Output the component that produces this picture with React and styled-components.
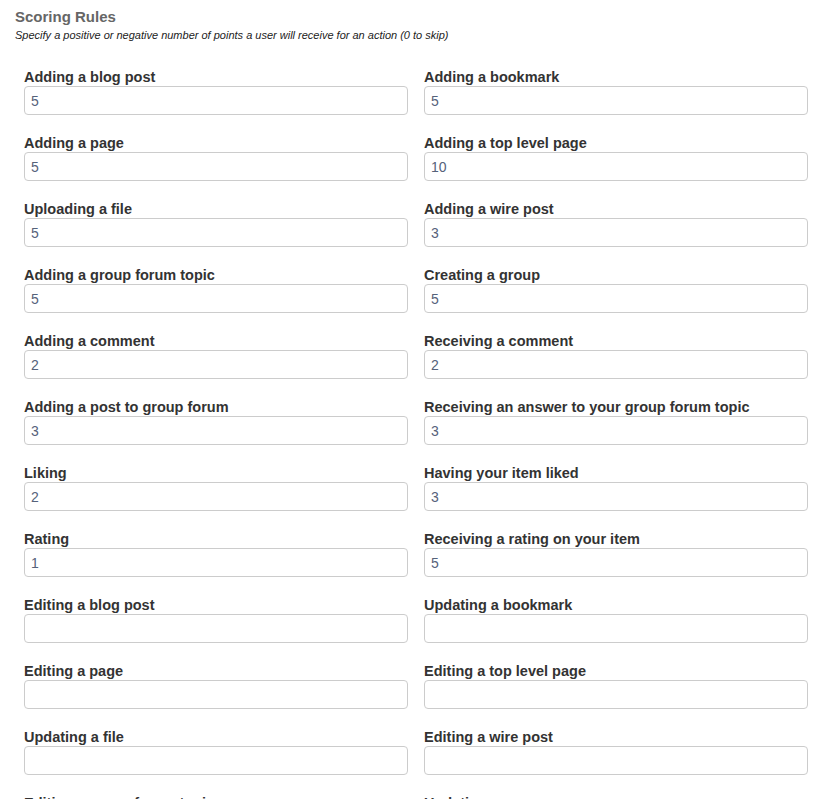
import styled, { createGlobalStyle } from 'styled-components';

const GlobalStyle = createGlobalStyle`
  html, body {
    margin: 0;
    padding: 0;
    background: #fff;
    overflow: hidden;
  }
  body {
    font-family: "Liberation Sans", Arial, sans-serif;
    color: #333;
  }
`;

const rules = [
  ['Adding a blog post', '5'],
  ['Adding a bookmark', '5'],
  ['Adding a page', '5'],
  ['Adding a top level page', '10'],
  ['Uploading a file', '5'],
  ['Adding a wire post', '3'],
  ['Adding a group forum topic', '5'],
  ['Creating a group', '5'],
  ['Adding a comment', '2'],
  ['Receiving a comment', '2'],
  ['Adding a post to group forum', '3'],
  ['Receiving an answer to your group forum topic', '3'],
  ['Liking', '2'],
  ['Having your item liked', '3'],
  ['Rating', '1'],
  ['Receiving a rating on your item', '5'],
  ['Editing a blog post', ''],
  ['Updating a bookmark', ''],
  ['Editing a page', ''],
  ['Editing a top level page', ''],
  ['Updating a file', ''],
  ['Editing a wire post', ''],
  ['Editing a group forum topic', ''],
  ['Updating a group', ''],
];

const App = () => (
  <>
    <GlobalStyle />
    <Panel>
      <Title>Scoring Rules</Title>
      <Hint>
        Specify a positive or negative number of points a user will receive for an action (0 to skip)
      </Hint>
      <FieldGrid>
        {rules.map(([label, value]) => (
          <Field key={label}>
            <Label>{label}</Label>
            <Input type='text' defaultValue={value} />
          </Field>
        ))}
      </FieldGrid>
    </Panel>
  </>
);

const Panel = styled.div`
  padding: 8px 0 0 15px;
`;

const Title = styled.h3`
  margin: 0;
  font-size: 15px;
  line-height: 18px;
  font-weight: bold;
  color: #666;
`;

const Hint = styled.p`
  margin: 3px 0 0;
  font-size: 11px;
  line-height: 13px;
  font-style: italic;
  color: #222;
`;

const FieldGrid = styled.div`
  display: grid;
  grid-template-columns: 384px 384px;
  column-gap: 16px;
  margin: 26px 0 0 9px;
`;

const Field = styled.div`
  display: flex;
  flex-direction: column;
  margin-bottom: 19px;
`;

const Label = styled.label`
  font-size: 14.5px;
  line-height: 18px;
  font-weight: bold;
  color: #333;
`;

const Input = styled.input`
  box-sizing: border-box;
  width: 100%;
  height: 29px;
  padding: 0 6px;
  border: 1px solid #ccc;
  border-radius: 4px;
  font-family: "Liberation Sans", Arial, sans-serif;
  font-size: 14px;
  color: #56627a;
  background: #fff;
  outline: none;
`;

export default App;
